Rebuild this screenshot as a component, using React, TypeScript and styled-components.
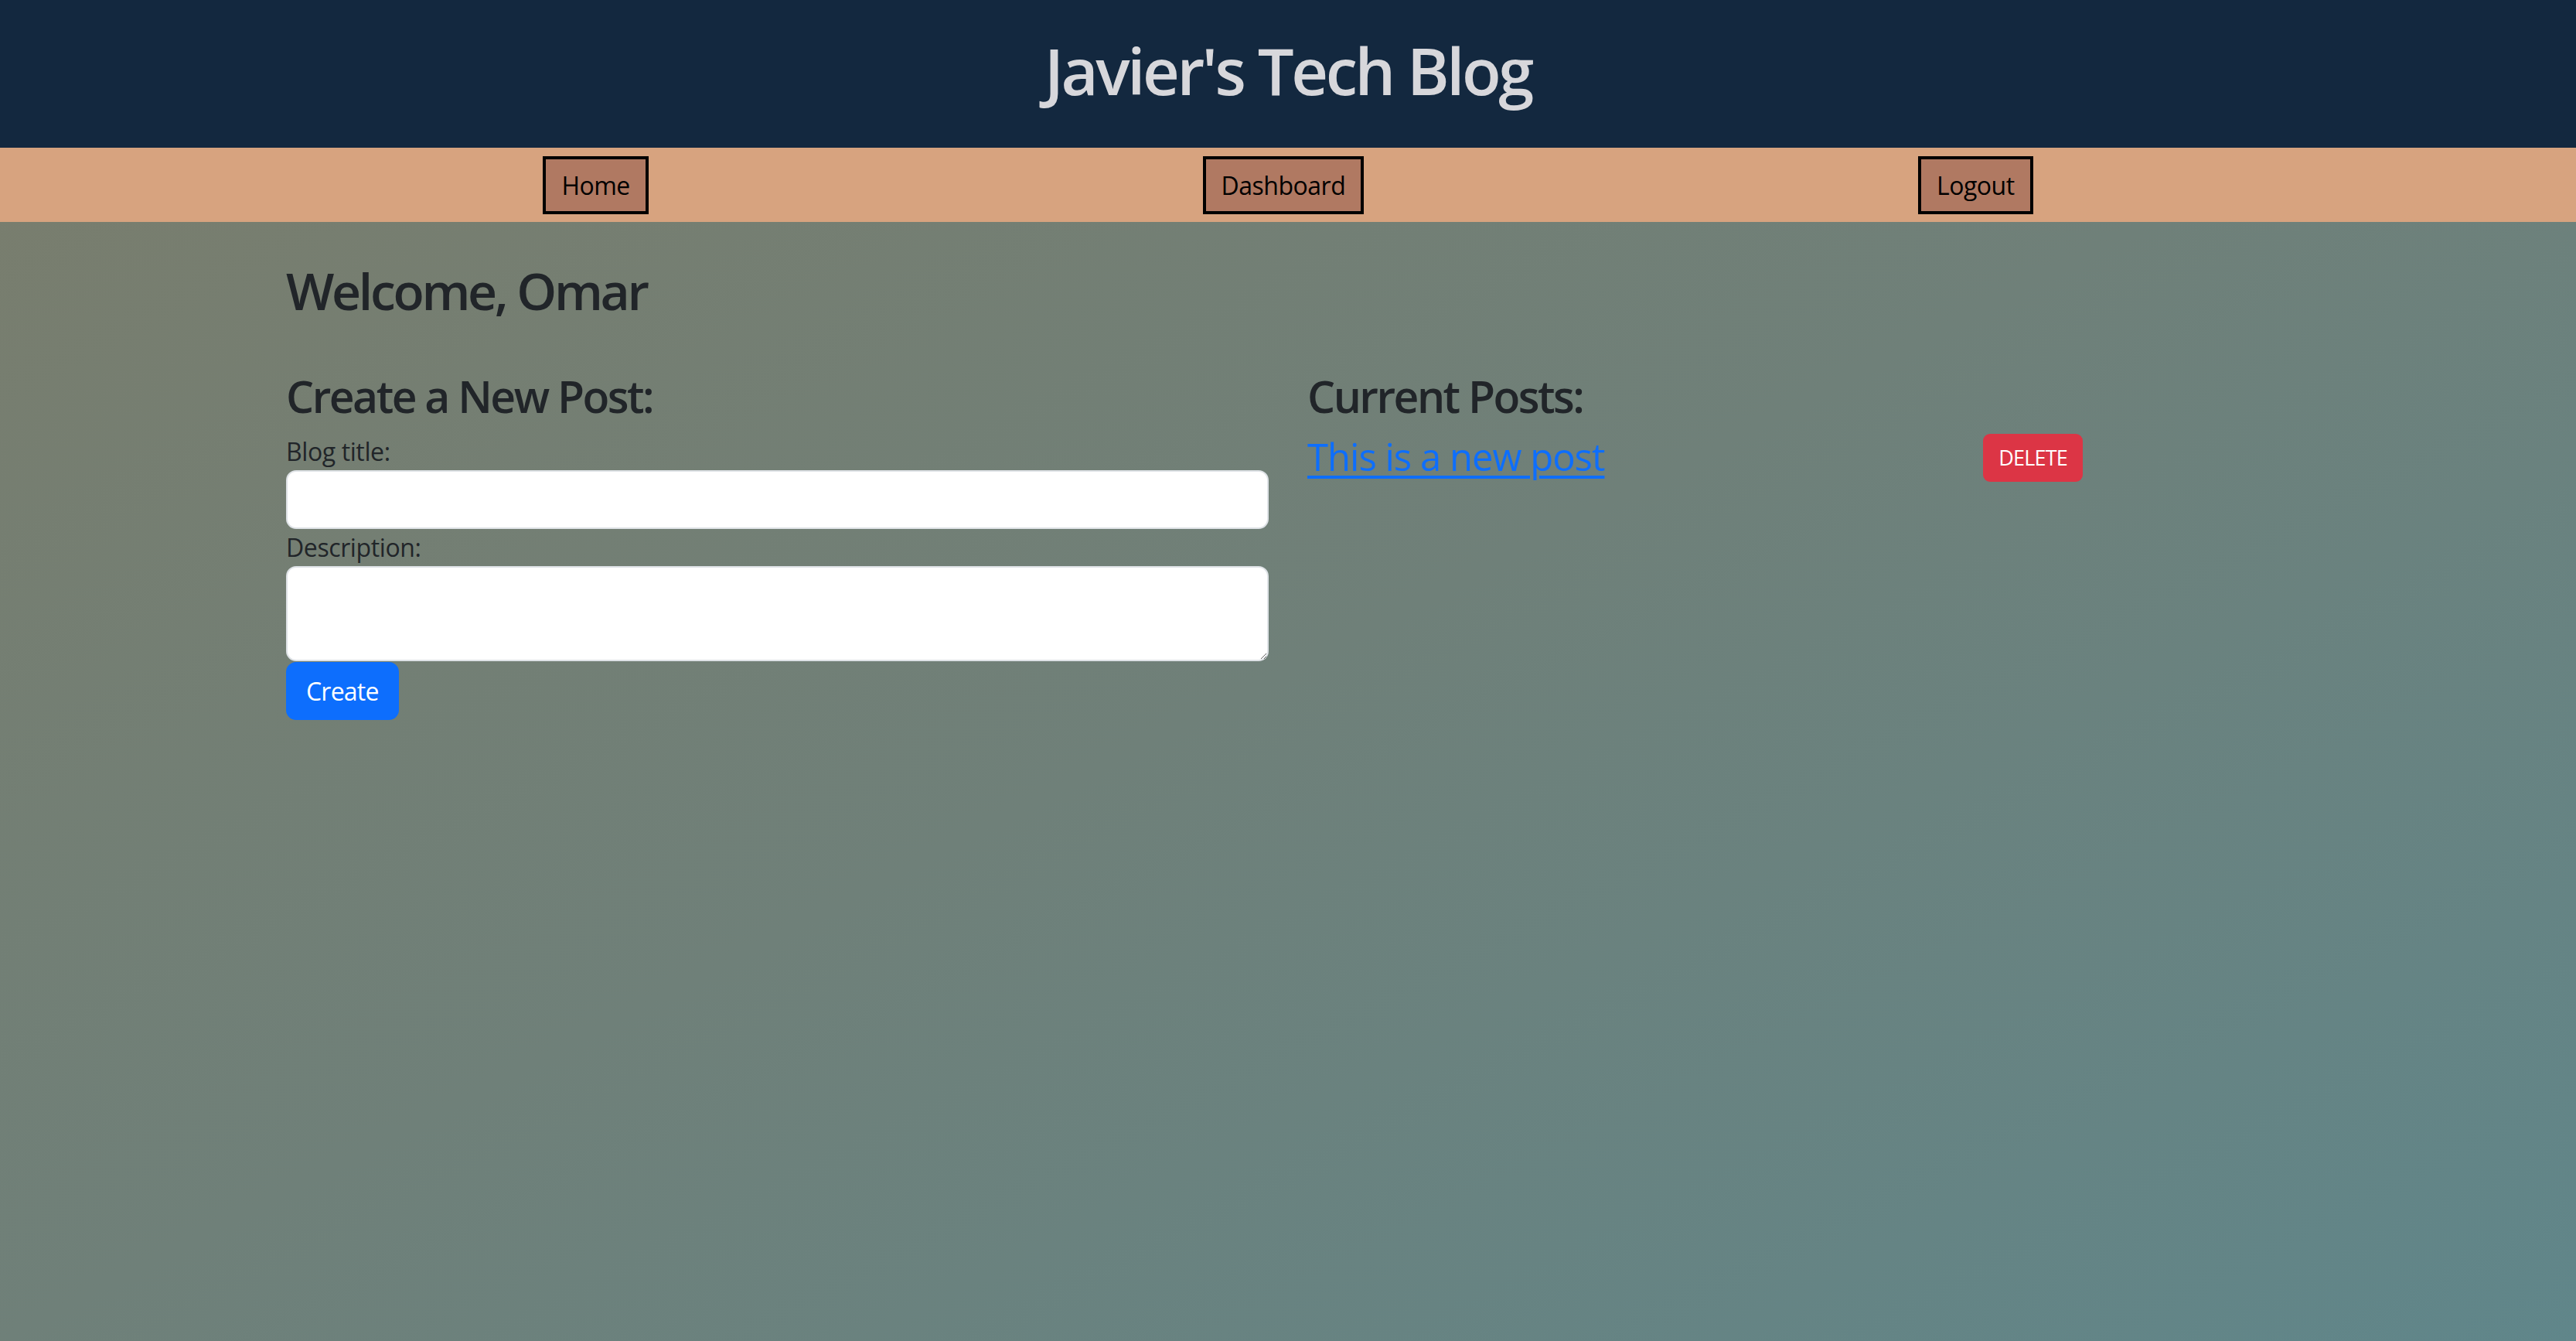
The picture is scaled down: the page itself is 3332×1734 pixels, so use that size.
import React from "react";
import styled, { createGlobalStyle } from "styled-components";

const GlobalStyle = createGlobalStyle`
  html, body {
    margin: 0;
    padding: 0;
  }
  body {
    min-height: 1734px;
    font-family: "Open Sans", "Noto Sans", "Liberation Sans", sans-serif;
    color: #212529;
    background: linear-gradient(to bottom right, #7a7d6c 0%, #6f8079 50%, #60868a 100%);
    background-attachment: fixed;
  }
  * { box-sizing: border-box; }
`;

const Page = styled.div`
  min-height: 1734px;
  display: flex;
  flex-direction: column;
`;

const Header = styled.header`
  height: 191px;
  background: #13283f;
  display: flex;
  align-items: center;
  justify-content: center;
  padding-bottom: 10px;
`;

const Title = styled.h1`
  margin: 0;
  font-size: 83px;
  font-weight: 600;
  line-height: 1.2;
  color: #d7d7db;
  letter-spacing: -3.4px;
`;

const NavBar = styled.nav`
  height: 96px;
  background: #d7a37f;
  display: flex;
  align-items: center;
`;

const NavInner = styled.div`
  width: 2644px;
  margin: 0 auto;
  display: flex;
  justify-content: space-around;
  align-items: center;
`;

const NavButton = styled.a`
  display: inline-block;
  background: #b07962;
  border: 4px solid #000;
  padding: 8px 20px;
  font-size: 32px;
  line-height: 51px;
  color: #000;
  text-decoration: none;
  letter-spacing: -0.5px;
`;

const Main = styled.main`
  width: 2592px;
  margin: 0 auto;
  padding-top: 47px;
`;

const Welcome = styled.h2`
  margin: 0;
  font-size: 66px;
  font-weight: 600;
  line-height: 82px;
  letter-spacing: -3.3px;
`;

const Columns = styled.div`
  display: grid;
  grid-template-columns: 1271px 1271px;
  column-gap: 50px;
  margin-top: 61px;
`;

const Column = styled.section`
  display: flex;
  flex-direction: column;
`;

const SectionTitle = styled.h3`
  margin: 0;
  font-size: 57px;
  font-weight: 600;
  line-height: 71px;
  letter-spacing: -2.5px;
`;

const Form = styled.form`
  display: flex;
  flex-direction: column;
  align-items: flex-start;
  margin-top: 12px;
`;

const Label = styled.label`
  font-size: 32px;
  line-height: 48px;
  letter-spacing: -0.4px;
  color: #212529;
`;

const TextInput = styled.input`
  width: 100%;
  height: 76px;
  border: 2px solid #dee2e6;
  border-radius: 13px;
  background: #fff;
  padding: 12px 25px;
  font-size: 34px;
  font-family: inherit;
  outline: none;
`;

const TextArea = styled.textarea`
  width: 100%;
  height: 123px;
  border: 2px solid #dee2e6;
  border-radius: 13px;
  background: #fff;
  padding: 12px 25px;
  font-size: 34px;
  font-family: inherit;
  outline: none;
  resize: vertical;
  display: block;
`;

const PrimaryButton = styled.button`
  margin-top: 1px;
  background: #0d6efd;
  color: #fff;
  border: 2px solid #0d6efd;
  border-radius: 13px;
  padding: 10px 24px;
  font-family: inherit;
  font-size: 32px;
  line-height: 51px;
  letter-spacing: -0.8px;
  cursor: pointer;
`;

const PostRow = styled.div`
  width: 1003px;
  margin-top: 13px;
  display: flex;
  justify-content: space-between;
  align-items: center;
  height: 62px;
`;

const PostLink = styled.a`
  font-size: 49px;
  line-height: 62px;
  color: #0d6efd;
  text-decoration: underline;
  text-decoration-thickness: 4px;
  text-underline-offset: 6px;
  letter-spacing: -1px;
  margin-top: -4px;
`;

const DangerButton = styled.button`
  background: #dc3545;
  color: #fff;
  border: 2px solid #dc3545;
  border-radius: 9px;
  padding: 7px 18px;
  font-family: inherit;
  font-size: 27px;
  line-height: 44px;
  letter-spacing: -0.8px;
  cursor: pointer;
`;

export default function App() {
  return (
    <>
      <GlobalStyle />
      <Page>
        <Header>
          <Title>Javier's Tech Blog</Title>
        </Header>
        <NavBar>
          <NavInner>
            <NavButton href="#">Home</NavButton>
            <NavButton href="#">Dashboard</NavButton>
            <NavButton href="#">Logout</NavButton>
          </NavInner>
        </NavBar>
        <Main>
          <Welcome>Welcome, Omar</Welcome>
          <Columns>
            <Column>
              <SectionTitle>Create a New Post:</SectionTitle>
              <Form onSubmit={(e) => e.preventDefault()}>
                <Label htmlFor="title">Blog title:</Label>
                <TextInput id="title" type="text" />
                <Label htmlFor="desc">Description:</Label>
                <TextArea id="desc" />
                <PrimaryButton type="submit">Create</PrimaryButton>
              </Form>
            </Column>
            <Column>
              <SectionTitle>Current Posts:</SectionTitle>
              <PostRow>
                <PostLink href="#">This is a new post</PostLink>
                <DangerButton type="button">DELETE</DangerButton>
              </PostRow>
            </Column>
          </Columns>
        </Main>
      </Page>
    </>
  );
}
